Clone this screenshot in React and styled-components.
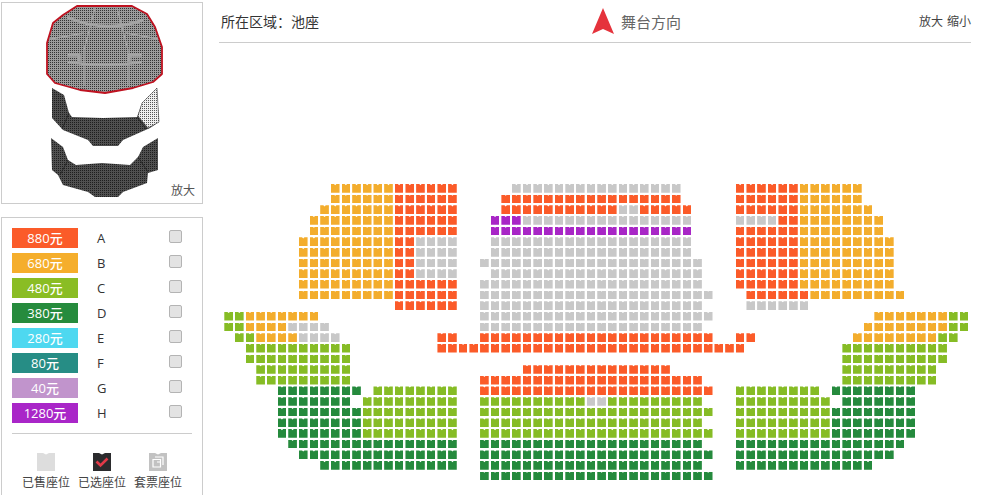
import React from 'react';
import styled, { createGlobalStyle } from 'styled-components';

const GlobalStyle = createGlobalStyle`
  html, body {
    margin: 0;
    padding: 0;
    background: #fff;
    overflow: hidden;
  }
  body {
    font-family: "Open Sans", "Noto Sans CJK SC", sans-serif;
    color: #333;
  }
`;

const tones = {
  O: '#fb5b29',
  Y: '#f3ad2d',
  L: '#86bc25',
  D: '#258a3d',
  H: '#c8c8c8',
  P: '#a826c6',
};

const COLS = 70;

// one string per seat row: tone, first column, last column
const seatRows = [
  'Y10-15 O16-21 H27-42 O48-53 Y54-59',
  'Y10-15 O16-21 O26-42 O48-53 Y54-59',
  'Y9-15 O16-21 O26-36 H37-38 O39-43 O48-53 Y54-60',
  'Y8-15 O16-21 P25-27 H28-43 H48-51 O52-53 Y54-61',
  'Y8-15 O16-21 P25-43 O48-53 Y54-61',
  'Y7-15 O16-17 H18-21 H25-43 O48-53 Y54-62',
  'Y7-15 O16-17 H18-21 H25-43 O48-53 Y54-62',
  'Y7-15 O16-17 H18-21 H24-44 O48-53 Y54-62',
  'Y7-15 O16-17 H18-21 H25-44 O48-53 Y54-62',
  'Y7-15 O16-21 H24-44 O48-53 Y54-62',
  'Y7-15 O16-21 H24-45 O49-54 Y55-63',
  'O16-21 H24-44 H49-54',
  'L0-1 Y2-8 H24-45 Y61-67 L68-69',
  'L0-1 Y2-5 H6-9 H24-44 Y60-67 L68-69',
  'L1-2 Y3-6 H7-10 O20-21 O24-45 O48-49 Y59-66 L67-68',
  'L2-11 O20-48 L58-67',
  'L2-11 L58-67',
  'L3-11 O28-41 L58-66',
  'L3-11 O24-44 L58-66',
  'D5-12 L14-21 O24-45 L48-55 D57-64',
  'D5-11 L13-21 L24-33 H34-35 L36-44 L48-56 D58-64',
  'D5-12 L13-21 L24-45 L48-56 D57-64',
  'D5-12 L13-21 L24-44 L48-56 D57-64',
  'D5-12 L13-21 L24-45 L48-56 D57-64',
  'D6-21 D24-44 D48-63',
  'D7-21 D24-45 D48-62',
  'D9-21 D24-44 D48-60',
  'D24-45',
];

const expandRow = (row) => {
  const cells = Array(COLS).fill(null);
  row.split(' ').forEach((run) => {
    const [from, to] = run.slice(1).split('-').map(Number);
    for (let c = from; c <= to; c++) cells[c] = run[0];
  });
  return cells;
};

const prices = [
  { label: '880元', zone: 'A', color: '#fb5b29' },
  { label: '680元', zone: 'B', color: '#f5ae2c' },
  { label: '480元', zone: 'C', color: '#8abd24' },
  { label: '380元', zone: 'D', color: '#268b3d' },
  { label: '280元', zone: 'E', color: '#4ed8f0' },
  { label: '80元', zone: 'F', color: '#268d85' },
  { label: '40元', zone: 'G', color: '#c194cc' },
  { label: '1280元', zone: 'H', color: '#a926c8' },
];

const Page = styled.div`
  display: flex;
  height: 495px;
  overflow: hidden;
`;

const Sidebar = styled.aside`
  width: 202px;
  flex: none;
  margin-left: 1px;
  padding-top: 2px;
  display: flex;
  flex-direction: column;
  gap: 13px;
`;

const MiniMap = styled.div`
  position: relative;
  box-sizing: border-box;
  width: 202px;
  height: 202px;
  flex: none;
  border: 1px solid #ccc;
  svg {
    display: block;
  }
`;

const ZoomLabel = styled.span`
  position: absolute;
  right: 7px;
  bottom: 4px;
  font-size: 12px;
  line-height: 16px;
  color: #555;
`;

const Legend = styled.div`
  box-sizing: border-box;
  width: 202px;
  height: 290px;
  flex: none;
  border: 1px solid #ccc;
  padding: 10px 10px 0;
`;

const PriceRow = styled.div`
  display: flex;
  align-items: center;
  height: 20px;
  margin-bottom: 5px;
`;

const PriceTag = styled.div`
  width: 66px;
  height: 20px;
  line-height: 20px;
  text-align: center;
  font-size: 13px;
  font-weight: 500;
  color: #fff;
  background: ${(p) => p.$color};
`;

const Zone = styled.span`
  margin-left: 19px;
  font-size: 13px;
  color: #333;
  flex: 1;
`;

const Check = styled.span`
  box-sizing: border-box;
  width: 13px;
  height: 13px;
  margin: 0 10px 3px 0;
  border: 1px solid #b4b4b4;
  border-radius: 2px;
  background: #e3e3e3;
`;

const Divider = styled.div`
  height: 1px;
  width: 180px;
  margin-top: 10px;
  background: #ccc;
`;

const KeyRow = styled.div`
  display: flex;
  margin: 19px 0 0 10px;
  gap: 8px;
`;

const KeyItem = styled.div`
  width: 48px;
  display: flex;
  flex-direction: column;
  align-items: center;
  gap: 4px;
  font-size: 12px;
  line-height: 16px;
  color: #444;
  white-space: nowrap;
`;

const Main = styled.main`
  width: 752px;
  flex: none;
  margin-left: 16px;
`;

const Header = styled.header`
  display: flex;
  align-items: center;
  height: 42px;
  border-bottom: 1px solid #ccc;
  padding-left: 2px;
`;

const Area = styled.div`
  width: 371px;
  flex: none;
  font-size: 14px;
  color: #333;
`;

const Stage = styled.div`
  display: flex;
  align-items: center;
  gap: 7px;
  font-size: 15px;
  color: #666;
`;

const ZoomLinks = styled.div`
  margin-left: auto;
  display: flex;
  gap: 4px;
  font-size: 12px;
  color: #444;
`;

const SeatMap = styled.div`
  margin: 141px 0 0 5.3px;
`;

const SeatRow = styled.div`
  display: grid;
  grid-template-columns: repeat(${COLS}, 10.667px);
  height: 10.667px;
`;

const Seat = styled.div`
  width: 8.7px;
  height: 8.7px;
  background: ${(p) => tones[p.$tone]};
  clip-path: polygon(0 0, 36% 0, 50% 13%, 64% 0, 100% 0, 100% 100%, 0 100%);
`;

const Blank = styled.div``;

const VenueMap = () => (
  <svg width="200" height="200" viewBox="2 3 200 200">
    <defs>
      <pattern id="dotsLight" width="2" height="2" patternUnits="userSpaceOnUse">
        <rect width="2" height="2" fill="#9c9c9c" />
        <rect width="1" height="1" fill="#333" />
      </pattern>
      <pattern id="dotsDark" width="2" height="2" patternUnits="userSpaceOnUse">
        <rect width="2" height="2" fill="#505050" />
        <rect width="1" height="1" fill="#1e1e1e" />
      </pattern>
      <pattern id="dotsPale" width="2" height="2" patternUnits="userSpaceOnUse">
        <rect width="2" height="2" fill="#eee" />
        <rect width="1" height="1" fill="#555" />
      </pattern>
    </defs>
    <path
      d="M77 6 L132 6 L147 14 L155 27 L162 47 L162 74 L153 82 L133 88 L105 93 L80 90 L55 83 L47 74 L47 43 L53 23 L63 15 Z"
      fill="url(#dotsLight)"
    />
    <g fill="none" stroke="#a4a4a4" strokeLinejoin="round">
      <path d="M67 17 Q105 34 143 20" strokeWidth="3" />
      <path d="M50 39 Q68 36 84 33 M126 33 Q142 36 158 39" strokeWidth="1.5" />
      <path d="M95 8 L84 50 L84 86 M117 8 L128 50 L128 86" strokeWidth="1.2" />
      <path d="M68 55 H79 V61 M142 55 H129 V61" strokeWidth="3.5" />
      <path d="M68 62 Q105 68 142 62" strokeWidth="2.4" />
    </g>
    <path
      d="M77 6 L132 6 L147 14 L155 27 L162 47 L162 74 L153 82 L133 88 L105 93 L80 90 L55 83 L47 74 L47 43 L53 23 L63 15 Z"
      fill="none"
      stroke="#bf1220"
      strokeWidth="1.8"
      strokeLinejoin="round"
    />
    <path
      d="M52 88 L64 95 L69 113 L72 117 L103 118 L137 117 L142 103 L157 88 L159 122 L150 128 L123 140 L118 146 L93 146 L88 140 L63 130 L52 118 Z"
      fill="url(#dotsDark)"
    />
    <path d="M142 103 L157 88 L159 122 L148 128 L138 116 Z" fill="url(#dotsPale)" stroke="#444" strokeWidth="0.5" />
    <path d="M69 113 L62 129 M137 117 L146 129" stroke="#222" strokeWidth="0.8" />
    <path
      d="M51 138 L63 147 L68 160 L76 165 L102 163 L130 165 L138 157 L143 147 L158 138 L158 170 L148 173 L147 183 L123 192 L118 197 L95 197 L88 192 L63 185 L58 175 L52 170 Z"
      fill="url(#dotsDark)"
    />
    <path d="M68 160 L60 175 M138 157 L148 172" stroke="#222" strokeWidth="0.8" />
  </svg>
);

const SoldIcon = () => (
  <svg width="18" height="18" viewBox="0 0 18 18">
    <path d="M0 0 L6 0 L9 1.5 L12 0 L18 0 L18 18 L0 18 Z" fill="#ddd" />
  </svg>
);

const PickedIcon = () => (
  <svg width="18" height="18" viewBox="0 0 18 18">
    <path d="M0 0 L6 0 L9 1.5 L12 0 L18 0 L18 18 L0 18 Z" fill="#2b2b2d" />
    <path d="M3.5 8.5 L7.5 12.5 L14.5 5.5" fill="none" stroke="#e23a48" strokeWidth="2.6" />
  </svg>
);

const PackageIcon = () => (
  <svg width="18" height="18" viewBox="0 0 18 18">
    <path d="M0 0 L6 0 L9 1.5 L12 0 L18 0 L18 18 L0 18 Z" fill="#c2c2c2" />
    <path d="M6 4 H14 V12 M4 6.5 H11.5 V14 H4 Z M8 9 H12" fill="none" stroke="#fff" strokeWidth="1.2" />
  </svg>
);

const StageIcon = () => (
  <svg width="22" height="26" viewBox="0 0 22 26">
    <path d="M11 0 L22 26 L11 21 L0 26 Z" fill="#e5333c" />
  </svg>
);

export default function App() {
  return (
    <Page>
      <GlobalStyle />
      <Sidebar>
        <MiniMap>
          <VenueMap />
          <ZoomLabel>放大</ZoomLabel>
        </MiniMap>
        <Legend>
          {prices.map((p) => (
            <PriceRow key={p.zone}>
              <PriceTag $color={p.color}>{p.label}</PriceTag>
              <Zone>{p.zone}</Zone>
              <Check />
            </PriceRow>
          ))}
          <Divider />
          <KeyRow>
            <KeyItem><SoldIcon />已售座位</KeyItem>
            <KeyItem><PickedIcon />已选座位</KeyItem>
            <KeyItem><PackageIcon />套票座位</KeyItem>
          </KeyRow>
        </Legend>
      </Sidebar>
      <Main>
        <Header>
          <Area>所在区域：池座</Area>
          <Stage>
            <StageIcon />
            舞台方向
          </Stage>
          <ZoomLinks>
            <span>放大</span>
            <span>缩小</span>
          </ZoomLinks>
        </Header>
        <SeatMap>
          {seatRows.map((row, r) => (
            <SeatRow key={r}>
              {expandRow(row).map((tone, c) =>
                tone ? <Seat key={c} $tone={tone} /> : <Blank key={c} />
              )}
            </SeatRow>
          ))}
        </SeatMap>
      </Main>
    </Page>
  );
}
